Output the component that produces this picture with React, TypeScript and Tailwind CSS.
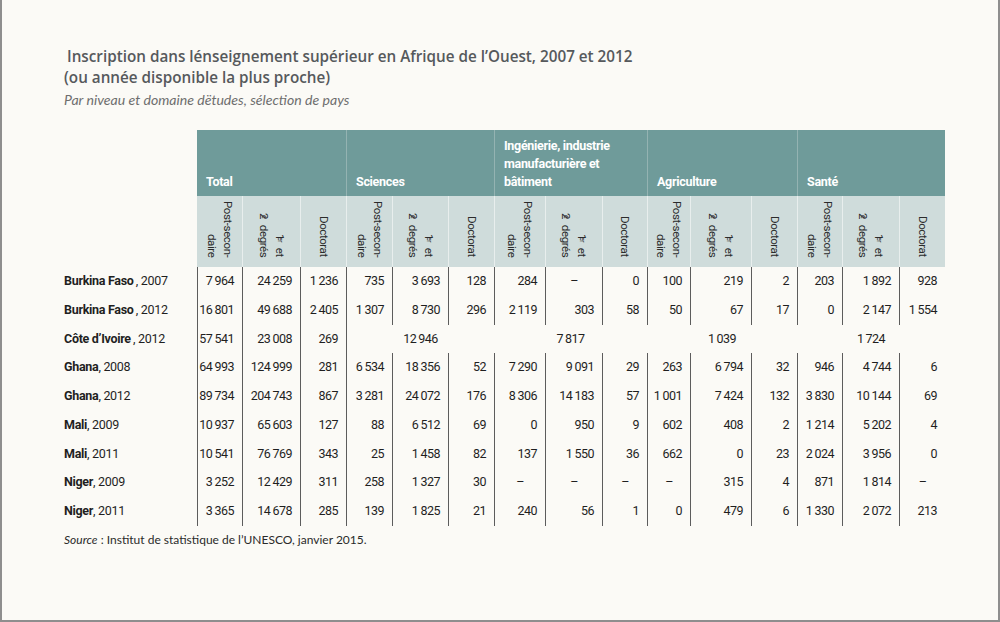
const narrow = "font-['Roboto',sans-serif] tracking-[-0.3px]";

const cols =
  'grid-cols-[133px_45px_58px_46px_46px_56px_46px_51px_57px_45px_43px_61px_46px_45px_57px_46px]';

const groups = [
  { key: 'total', lines: ['Total'] },
  { key: 'sci', lines: ['Sciences'] },
  { key: 'ing', lines: ['Ingénierie, industrie', 'manufacturière et', 'bâtiment'] },
  { key: 'agr', lines: ['Agriculture'] },
  { key: 'san', lines: ['Santé'] },
];

type Row = { name: string; year: string; values: string[]; merged?: string[] };

const rows: Row[] = [
  { name: 'Burkina Faso', year: '2007', values: ['7 964', '24 259', '1 236', '735', '3 693', '128', '284', '–', '0', '100', '219', '2', '203', '1 892', '928'] },
  { name: 'Burkina Faso', year: '2012', values: ['16 801', '49 688', '2 405', '1 307', '8 730', '296', '2 119', '303', '58', '50', '67', '17', '0', '2 147', '1 554'] },
  { name: 'Côte d’Ivoire', year: '2012', values: ['57 541', '23 008', '269'], merged: ['12 946', '7 817', '1 039', '1 724'] },
  { name: 'Ghana', year: '2008', values: ['64 993', '124 999', '281', '6 534', '18 356', '52', '7 290', '9 091', '29', '263', '6 794', '32', '946', '4 744', '6'] },
  { name: 'Ghana', year: '2012', values: ['89 734', '204 743', '867', '3 281', '24 072', '176', '8 306', '14 183', '57', '1 001', '7 424', '132', '3 830', '10 144', '69'] },
  { name: 'Mali', year: '2009', values: ['10 937', '65 603', '127', '88', '6 512', '69', '0', '950', '9', '602', '408', '2', '1 214', '5 202', '4'] },
  { name: 'Mali', year: '2011', values: ['10 541', '76 769', '343', '25', '1 458', '82', '137', '1 550', '36', '662', '0', '23', '2 024', '3 956', '0'] },
  { name: 'Niger', year: '2009', values: ['3 252', '12 429', '311', '258', '1 327', '30', '–', '–', '–', '–', '315', '4', '871', '1 814', '–'] },
  { name: 'Niger', year: '2011', values: ['3 365', '14 678', '285', '139', '1 825', '21', '240', '56', '1', '0', '479', '6', '1 330', '2 072', '213'] },
];

const thin = (s: string) => s.replace(' ', '\u2009');

function SubHeader({ kind, first }: { kind: number; first: boolean }) {
  return (
    <div
      className={`h-[71px] bg-[#cfdcdb] flex justify-center items-end pb-[10px] ${
        first ? '' : 'border-l border-[#e8eeed]'
      }`}
    >
      <div className="[writing-mode:vertical-rl] text-end whitespace-nowrap leading-[16px] text-[11.5px] tracking-[-0.4px] text-[#2b2b2b]">
        {kind === 0 && (
          <>
            Post-secon-
            <br />
            daire
          </>
        )}
        {kind === 1 && (
          <>
            1<sup className="text-[7px]">er</sup> et
            <br />
            2<sup className="text-[7px]">e</sup> degrés
          </>
        )}
        {kind === 2 && <>Doctorat</>}
      </div>
    </div>
  );
}

export default function App() {
  return (
    <div className="w-[1000px] h-[622px] bg-[#fbfaf6] border-l-2 border-r-2 border-b-2 border-[#8e8e8e] pl-[62px] pt-[46px] overflow-hidden">
      {/* Title */}
      <h1 className="font-['Open_Sans',sans-serif] font-semibold text-[15.25px] leading-[21px] text-[#56595c]">
        <span className="pl-[3px]">Inscription dans lénseignement supérieur en Afrique de l’Ouest, 2007 et 2012</span>
        <br />
        (ou année disponible la plus proche)
      </h1>
      <p className="font-['Lato',sans-serif] italic text-[14.1px] leading-[18px] text-[#6e6e6e] mt-[3px]">
        Par niveau et domaine dëtudes, sélection de pays
      </p>

      {/* Table */}
      <div className={`grid ${cols} mt-[21px] ${narrow} text-[12.5px]`}>
        {/* Group header */}
        <div />
        {groups.map((g, i) => (
          <div
            key={g.key}
            className={`col-span-3 h-[66px] bg-[#6f9b9a] flex flex-col justify-end pl-[9px] pb-[5px] text-white font-bold leading-[18px] ${
              i === 0 ? '' : 'border-l border-[#94b3b2]'
            }`}
          >
            {g.lines.map((l) => (
              <span key={l} className="whitespace-nowrap">
                {l}
              </span>
            ))}
          </div>
        ))}

        {/* Sub header */}
        <div />
        {groups.flatMap((g, gi) =>
          [0, 1, 2].map((k) => <SubHeader key={`${g.key}-${k}`} kind={k} first={gi === 0 && k === 0} />)
        )}

        {/* Body */}
        {rows.map((r) => (
          <div key={r.name + r.year} className="contents">
            <div className="h-[28.75px] flex items-center whitespace-nowrap text-[#1f1f1f]">
              <span className="font-bold">{r.name}</span>
              {r.name === 'Burkina Faso' || r.merged ? <span>&thinsp;</span> : null}
              <span>, {r.year}</span>
            </div>
            {r.values.map((v, i) => (
              <div
                key={i}
                className={`h-[28.75px] flex items-center whitespace-nowrap tracking-[-0.5px] border-l border-[#5c5c5c] text-[#1f1f1f] ${
                  v === '–' ? 'justify-center' : 'justify-end pr-[8px]'
                }`}
              >
                {thin(v)}
              </div>
            ))}
            {r.merged?.map((v, i) => (
              <div
                key={`m${i}`}
                className={`col-span-3 h-[28.75px] flex items-center justify-center whitespace-nowrap tracking-[-0.5px] text-[#1f1f1f] ${
                  i === 0 ? 'border-l border-[#5c5c5c]' : ''
                }`}
              >
                {thin(v)}
              </div>
            ))}
          </div>
        ))}
      </div>

      {/* Source */}
      <p className="mt-[5px] font-['Lato',sans-serif] text-[12px] leading-[18px] text-[#2a2a2a]">
        <span className="italic">Source</span> : Institut de statistique de l’UNESCO, janvier 2015.
      </p>
    </div>
  );
}
